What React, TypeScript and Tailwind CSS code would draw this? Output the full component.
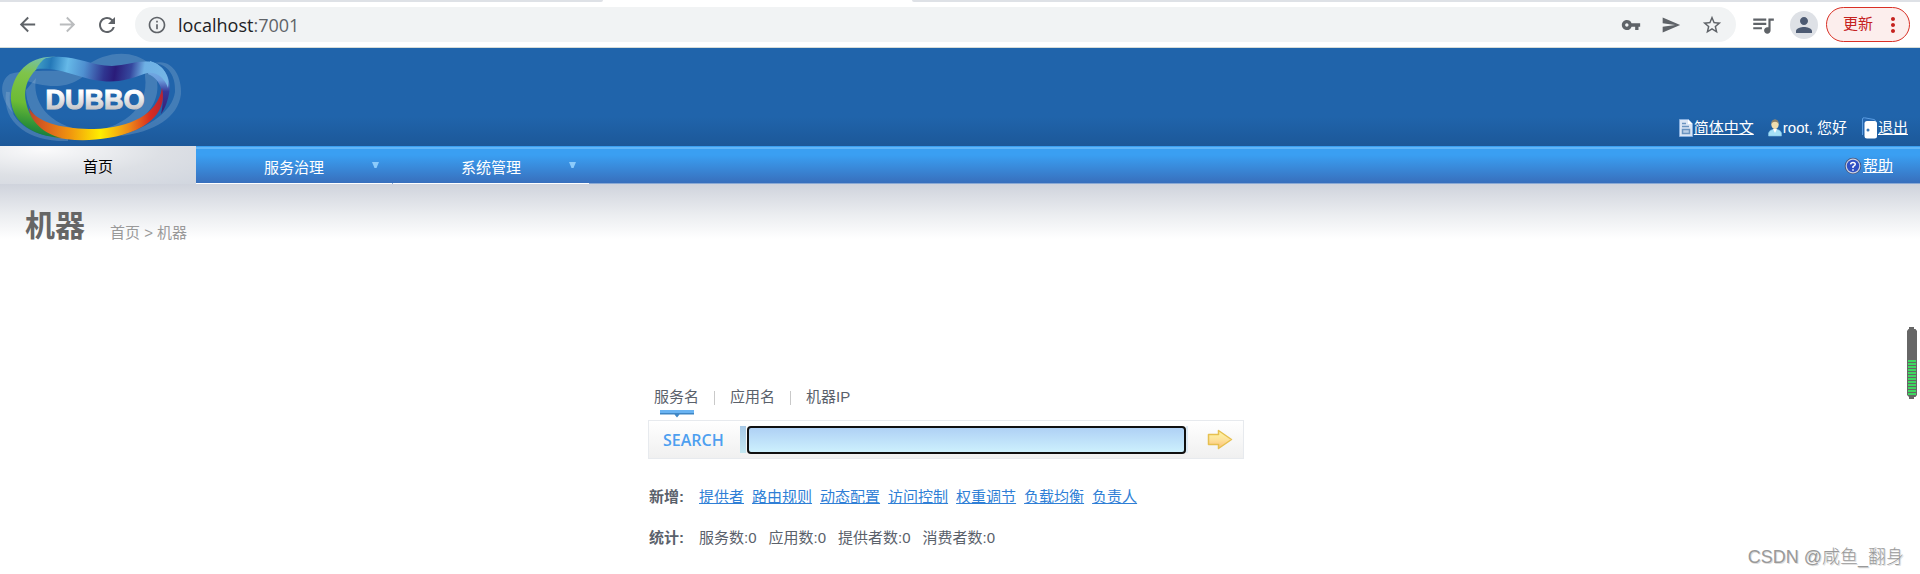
import React from "react";
import { MdArrowBack, MdArrowForward, MdRefresh, MdInfoOutline, MdVpnKey, MdSend, MdStarBorder, MdQueueMusic, MdPerson, MdMoreVert } from "react-icons/md";

const sans = "font-['Liberation_Sans','Noto_Sans_CJK_SC',sans-serif]";

function Logo() {
  return (
    <svg width="184" height="98" viewBox="0 0 184 98" role="img" aria-label="DUBBO">
      <defs>
        <linearGradient id="top" x1="40" y1="0" x2="168" y2="20" gradientUnits="userSpaceOnUse">
          <stop offset="0" stopColor="#3f9cc4" />
          <stop offset=".1" stopColor="#2478b8" />
          <stop offset=".23" stopColor="#66b9e8" />
          <stop offset=".36" stopColor="#4f90d0" />
          <stop offset=".52" stopColor="#2f3590" />
          <stop offset=".6" stopColor="#2a1c7a" />
          <stop offset=".72" stopColor="#35489e" />
          <stop offset=".82" stopColor="#6eb0e4" />
          <stop offset="1" stopColor="#74b6e6" />
        </linearGradient>
        <linearGradient id="left" x1="46" y1="8" x2="30" y2="90" gradientUnits="userSpaceOnUse">
          <stop offset="0" stopColor="#72c0b8" />
          <stop offset=".25" stopColor="#7fc44a" />
          <stop offset=".6" stopColor="#6cbb35" />
          <stop offset=".85" stopColor="#2c9038" />
          <stop offset="1" stopColor="#0c7440" />
        </linearGradient>
        <linearGradient id="bottom" x1="29" y1="0" x2="164" y2="0" gradientUnits="userSpaceOnUse">
          <stop offset="0" stopColor="#b8472b" />
          <stop offset=".12" stopColor="#d9601f" />
          <stop offset=".3" stopColor="#f0940f" />
          <stop offset=".53" stopColor="#ffee00" />
          <stop offset=".74" stopColor="#ee8a18" />
          <stop offset=".9" stopColor="#d82c20" />
          <stop offset="1" stopColor="#b02438" />
        </linearGradient>
        <linearGradient id="right" x1="0" y1="16" x2="0" y2="62" gradientUnits="userSpaceOnUse">
          <stop offset="0" stopColor="#74b6e6" />
          <stop offset=".35" stopColor="#6c9ddd" />
          <stop offset=".6" stopColor="#35389a" />
          <stop offset="1" stopColor="#3a2276" />
        </linearGradient>
        <linearGradient id="word" x1="0" y1="0" x2="0" y2="1">
          <stop offset="0.25" stopColor="#ffffff" />
          <stop offset="0.8" stopColor="#c6c6c9" />
        </linearGradient>
      </defs>
      <g fill="#a9c4de" fillOpacity=".26">
        <path d="M10 26C30 20 66 26 86 18C104 4 132 0 150 16C136 14 126 18 112 18C96 18 88 26 78 32C62 42 40 38 24 32C14 36 10 48 11 50C10 54 12 62 14 66C0 52-2 34 10 26Z" />
        <path fillRule="evenodd" d="M146 14C162 28 160 50 148 64C134 80 110 90 82 90C50 88 26 68 26 42L36 30C32 52 46 78 88 83C118 82 150 62 145 28Z" />
        <path d="M154 15C172 10 182 28 181 46C178 70 154 84 120 88C150 78 172 64 175 44C176 28 168 16 154 15Z" />
      </g>
      <path fill="none" stroke="#a9c4de" strokeOpacity=".26" strokeWidth="4" d="M8 44C4 74 30 92 68 91" />
      <path fill="url(#right)" d="M150 13C165 17 172 32 169 46C167 56 164 62 161 66C165 50 163 32 148 26Z" />
      <path fill="url(#bottom)" d="M29 60C38 76 66 81 94 81C130 80 158 66 162 40C166 56 158 72 136 82C108 94 74 94 54 89C38 84 30 72 29 60Z" />
      <path fill="url(#left)" d="M56 9C30 7 14 24 11 46C9 72 30 88 62 90C44 86 30 74 26 54C22 34 34 18 56 9Z" />
      <path fill="url(#top)" d="M46 10C74 5 88 18 112 18C128 17 138 12 152 14C164 18 170 29 168 40C164 28 154 22 144 26C130 31 118 35 102 33C78 31 64 19 36 21C39 16 42 12 46 10Z" />
      <text x="95" y="61" textAnchor="middle" fontSize="27" fontWeight="bold" fill="url(#word)" stroke="url(#word)" strokeWidth="1" className="font-['Liberation_Sans',sans-serif]">DUBBO</text>
    </svg>
  );
}

function DocIcon() {
  return (
    <svg width="14" height="18" viewBox="0 0 14 18" aria-hidden="true">
      <path d="M.5.500h9L13.500 5v12.500H.5z" fill="#dbe6f5" stroke="#86aede" />
      <path d="M9 .5V5h4.500z" fill="#fff" />
      <path d="M3 4.500h4M3 7.500h7" stroke="#6b94c0" strokeWidth="1.500" />
      <rect x="3.500" y="10.500" width="7" height="4" fill="#b8cde6" stroke="#6b94c0" strokeWidth="1.500" />
    </svg>
  );
}

function UserIcon() {
  return (
    <svg width="14" height="18" viewBox="0 0 14 18" aria-hidden="true">
      <path d="M.5 17v-3q1-3 4-3.500h5q3 .5 4 3.500v3z" fill="#a5e0f6" stroke="#7cc0e6" strokeWidth=".6" />
      <path d="M5 10h4l-2 4z" fill="#fff" />
      <ellipse cx="7" cy="5.500" rx="3.700" ry="4.700" fill="#eedcae" />
      <path d="M3.300 5Q3.500.6 7 .6T10.700 5Q9.500 2.800 7 2.800T3.300 5z" fill="#8d8068" />
    </svg>
  );
}

function DoorIcon() {
  return (
    <svg width="17" height="22" viewBox="0 0 17 22" aria-hidden="true">
      <path d="M1.500 18V2q0-1.500 2-1.200L13 2.500q1.500.3 1.500 2" fill="#2466b0" stroke="#5a9ce0" />
      <rect x="3.500" y="4" width="12.500" height="17.500" rx="2.500" fill="#fff" />
      <circle cx="7" cy="13" r="1.500" fill="#3a78b8" />
    </svg>
  );
}

function HelpIcon() {
  return (
    <svg width="18" height="18" viewBox="0 0 18 18" aria-hidden="true">
      <circle cx="9" cy="9" r="8.300" fill="#46557e" />
      <circle cx="9" cy="9" r="7.400" fill="#c9d0e2" />
      <circle cx="9" cy="9" r="6.200" fill="#2f50c4" />
      <path d="M6.600 7.400Q6.800 5.400 9 5.400t2.300 1.900Q11.300 8.400 9 9.600V11M9 12.200V13.700" fill="none" stroke="#fff" strokeWidth="1.500" />
    </svg>
  );
}

function ArrowIcon() {
  return (
    <svg width="26" height="21" viewBox="0 0 26 21" aria-hidden="true">
      <defs>
        <linearGradient id="gold" x1="0" y1="0" x2="0" y2="1">
          <stop offset="0" stopColor="#fdf8a8" />
          <stop offset=".5" stopColor="#fde29a" />
          <stop offset="1" stopColor="#fcc078" />
        </linearGradient>
      </defs>
      <path d="M1.500 5.500h10V1.500L24.500 10.500 11.500 19.500V15.500h-10z" fill="url(#gold)" stroke="#e6c050" strokeWidth="1.500" strokeLinejoin="round" />
    </svg>
  );
}

function BatteryGauge() {
  return (
    <svg width="10" height="72" viewBox="0 0 10 72" aria-hidden="true" className="absolute right-[3px] top-[327px]">
      <path d="M2 0h5v2h1.500L10 4v64l-1.500 2H7v2H2v-2L0 68V4l1.500-2H2z" fill="#666" />
      <path d="M1 34h8M1 37h8M1 40h8M1 43h8M1 46h8M1 49h8M1 52h8M1 55h8M1 58h8M1 61h8M1 64h8M1 67h8" stroke="#3ed860" strokeWidth="2" />
    </svg>
  );
}

function BrowserBar() {
  return (
    <div className="border-b border-[#d5dcd8] bg-white text-[#5f6368]">
      <div className="flex h-[2px] justify-between">
        <span className="w-[31.400%] rounded-br-full bg-[#dee1e6]" />
        <span className="w-[52.500%] rounded-bl-full bg-[#dee1e6]" />
      </div>
      <div className="flex h-[45px] items-center pl-[15px] pr-[10px]">
        <div className="flex items-center gap-4">
          <button aria-label="后退" className="flex size-6 items-center justify-center"><MdArrowBack size={23} /></button>
          <button aria-label="前进" className="flex size-6 items-center justify-center text-[#babcbe]"><MdArrowForward size={23} /></button>
          <button aria-label="刷新" className="flex size-6 items-center justify-center"><MdRefresh size={24} /></button>
        </div>
        <div className="ml-4 flex h-[35px] flex-1 items-center rounded-full bg-[#f1f3f4] px-3">
          <MdInfoOutline size={20} />
          <span className="ml-[11px] font-['Open_Sans',sans-serif] text-lg leading-6 text-[#202124]">localhost<span className="text-[#5f6368]">:7001</span></span>
          <div className="ml-auto flex items-center gap-5 pr-px">
            <button aria-label="密码"><MdVpnKey size={20} /></button>
            <button aria-label="分享"><MdSend size={20} /></button>
            <button aria-label="收藏"><MdStarBorder size={22} /></button>
          </div>
        </div>
        <button aria-label="媒体" className="ml-[14px]"><MdQueueMusic size={26} /></button>
        <button aria-label="用户" className="ml-[14px] flex size-7 items-center justify-center rounded-full bg-[#dee1e6] text-[#4d5b73]"><MdPerson size={24} /></button>
        <button className="ml-2 flex h-[35px] items-center gap-2 rounded-full border border-[#d93025] bg-[#fceeed] pl-4 pr-1 text-[15px] text-[#c5221f]">
          更新<MdMoreVert size={24} />
        </button>
      </div>
    </div>
  );
}

function Header() {
  return (
    <header className="flex h-[98px] items-end justify-between bg-linear-to-b from-[#2064ab] from-70% to-[#1c5899] pr-3 text-[15px] text-white">
      <a href="#home" className="self-start"><Logo /></a>
      <div className="flex h-9 items-center gap-[14px]">
        <span className="flex items-center gap-px"><DocIcon /><a href="#lang" className="underline">简体中文</a></span>
        <span className="flex items-center gap-px"><UserIcon />root, 您好</span>
        <span className="flex items-center"><DoorIcon /><a href="#logout" className="underline">退出</a></span>
      </div>
    </header>
  );
}

function NavMenu({ label }: { label: string }) {
  return (
    <button className="relative w-[196px] border-b border-white pt-2 text-center">
      {label}
      <svg width="7" height="6" viewBox="0 0 7 6" className="absolute right-[13px] top-4" aria-hidden="true"><path d="M0 0h7L4.500 6h-2z" fill="#8ccbfb" /></svg>
    </button>
  );
}

function Nav() {
  return (
    <nav className="flex h-[38px] bg-[linear-gradient(#3a9ff2_0px,#3a9ff2_1px,#62b6f8_1px,#62b6f8_3px,#3a9ff2_3px,#3a9ff2_9px,#386fbc_37px,#8aa9d4_37px)] text-[15px] text-white">
      <a href="#home" className="flex w-[196px] items-center justify-center bg-[radial-gradient(ellipse_at_22%_10%,#fafafb,#dde0e5_55%,#d1d6df)] pt-[5px] text-black">首页</a>
      <div className="flex gap-px">
        <NavMenu label="服务治理" />
        <NavMenu label="系统管理" />
      </div>
      <div className="flex flex-1 items-center justify-end gap-px pr-[27px] pt-[2px]">
        <HelpIcon /><a href="#help" className="underline">帮助</a>
      </div>
    </nav>
  );
}

const additions = ["提供者", "路由规则", "动态配置", "访问控制", "权重调节", "负载均衡", "负责人"];
const stats = ["服务数:0", "应用数:0", "提供者数:0", "消费者数:0"];

function Search() {
  return (
    <section className="mx-auto mt-[140px] w-[596px] text-[15px] text-[#5a616b]">
      <div className="flex h-[35px] items-start pl-[6px]">
        <button className="flex flex-col items-center leading-6">
          服务名
          <svg width="34" height="8" viewBox="0 0 34 8" className="mt-px" aria-hidden="true"><path d="M0 0h34v3H0z" fill="#69b3f2" /><path d="M0 3h34v1.500H19.500L17 7.500l-2.500-3H0z" fill="#3f86c4" /></svg>
        </button>
        <span className="mx-[15px] mt-[6px] h-[14px] w-px bg-[#c9c9c9]" />
        <button className="leading-6">应用名</button>
        <span className="mx-[15px] mt-[6px] h-[14px] w-px bg-[#c9c9c9]" />
        <button className="leading-6">机器IP</button>
      </div>
      <form className="flex h-[39px] items-center border border-[#e7eaee] bg-linear-to-b from-white to-[#f0f0f0]">
        <label htmlFor="search" className="w-[91px] pl-[14px] font-['Open_Sans',sans-serif] text-base font-semibold text-[#4d9ff0]">SEARCH</label>
        <span className="mr-px h-[27px] w-[6px] bg-linear-to-b from-[#a6c8e6] to-[#c5e8f2]" />
        <input id="search" className="h-7 min-w-0 flex-1 rounded-[4px] border-2 border-[#101010] bg-linear-to-b from-[#afd1f5] to-[#cdf0fd] px-2 outline-none" />
        <span className="h-[27px] w-[2px] bg-[#dfeaf4]" />
        <button type="submit" aria-label="搜索" className="flex w-[55px] justify-center pl-2"><ArrowIcon /></button>
      </form>
      <div className="mt-[26px] flex pl-px leading-6"><b className="w-[50px]">新增:</b>
        <div className="flex gap-2">{additions.map((t) => <a key={t} href="#add" className="text-[#2f7fd6] underline">{t}</a>)}</div>
      </div>
      <div className="mt-[17px] flex pl-px leading-6"><b className="w-[50px]">统计:</b>
        <div className="flex gap-3">{stats.map((t) => <span key={t}>{t}</span>)}</div>
      </div>
    </section>
  );
}

export default function App() {
  return (
    <div className={`relative min-h-screen overflow-hidden bg-white ${sans}`}>
      <BrowserBar />
      <Header />
      <Nav />
      <main>
        <div className="flex h-[61px] items-end gap-[25px] bg-linear-to-b from-[#cfd3dc] via-[#ebedf0] to-white to-90% pl-[25px]">
          <h1 className="pb-px text-[30px] font-bold leading-9 text-[#666]">机器</h1>
          <p className="text-[15px] leading-6 text-[#999]"><a href="#home">首页</a> &gt; 机器</p>
        </div>
        <div className="pr-7"><Search /></div>
      </main>
      <BatteryGauge />
      <p className="absolute bottom-[5px] right-4 text-[18px] font-light leading-6 text-[#999] [text-shadow:1px_1px_0_#ddd]">CSDN @咸鱼_翻身</p>
    </div>
  );
}
